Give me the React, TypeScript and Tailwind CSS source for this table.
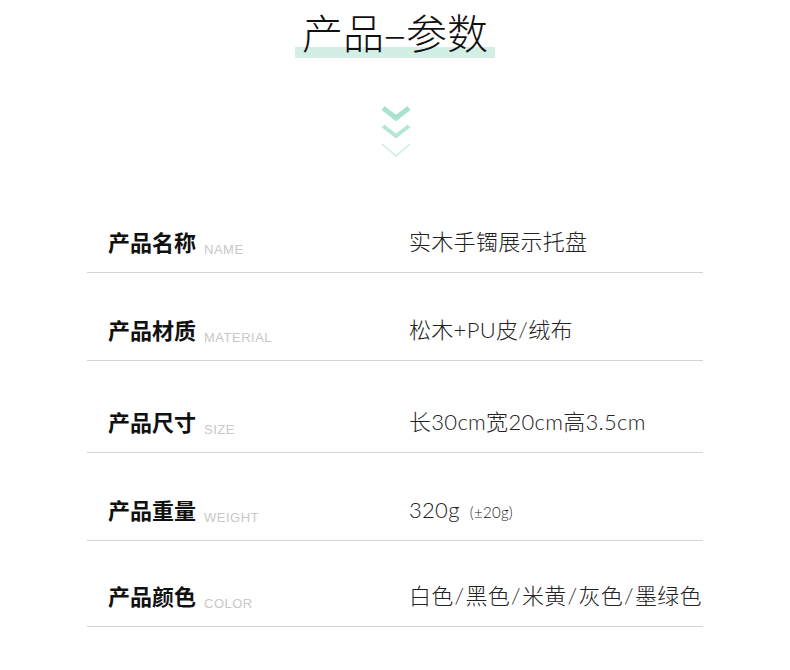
import React from "react";

const rows = [
  { label: "产品名称", en: "NAME", value: "实木手镯展示托盘", h: "h-[88px]" },
  { label: "产品材质", en: "MATERIAL", value: "松木+PU皮/绒布", h: "h-[88px]" },
  { label: "产品尺寸", en: "SIZE", value: "长30cm宽20cm高3.5cm", h: "h-[92px]" },
  { label: "产品重量", en: "WEIGHT", value: "320g", note: "(±20g)", h: "h-[88px]" },
  { label: "产品颜色", en: "COLOR", colors: ["白色", "黑色", "米黄", "灰色", "墨绿色"], h: "h-[86px]" },
];

const Chevrons = () => (
  <svg width="32" height="58" viewBox="0 0 32 58" fill="none">
    <path d="M3 5 L16 15 L29 5" stroke="#a9e3cf" strokeWidth="5" />
    <path d="M3 23 L16 33 L29 23" stroke="#b5e7d6" strokeWidth="4" />
    <path d="M2 41 L16 53 L30 41" stroke="#c9eee1" strokeWidth="1.5" />
  </svg>
);

export default function App() {
  return (
    <div className="w-[790px] h-[670px] bg-white overflow-hidden font-['Noto_Sans_CJK_SC','Noto_Sans',sans-serif]">
      <div className="flex justify-center pt-[3px]">
        <div className="relative px-[7px]">
          <div className="absolute left-0 right-0 bottom-[1px] h-[11px] bg-[#d3efe5]" />
          <h1 className="relative text-[41px] leading-[56px] font-light text-[#111]">产品–参数</h1>
        </div>
      </div>
      <div className="flex justify-center mt-[44px] ml-[1px]">
        <Chevrons />
      </div>
      <div className="mt-[24px] mx-[87px] w-[616px]">
        {rows.map((r) => (
          <div key={r.label} className={`${r.h} flex items-end border-b border-[#d4d4d4]`}>
            <div className="flex items-center w-full h-[60px] pb-[1px]">
              <div className="w-[322px] shrink-0 pl-[21px] flex items-baseline">
                <span className="text-[22px] font-bold text-[#111]">{r.label}</span>
                <span className="ml-[8px] text-[13px] text-[#c8c8c8] font-['Liberation_Sans',sans-serif] tracking-[0.5px] relative top-[3px]">{r.en}</span>
              </div>
              <div className="flex items-baseline whitespace-nowrap text-[22px] font-light text-[#222] font-['Lato','Noto_Sans_CJK_SC',sans-serif] tracking-[0.3px]">
                {r.colors ? (
                  r.colors.map((c, i) => (
                    <span key={c}>
                      {i > 0 && <span className="px-[1px]">/</span>}
                      {c}
                    </span>
                  ))
                ) : (
                  <span>{r.value}</span>
                )}
                {r.note && <span className="ml-[10px] text-[15px]">{r.note}</span>}
              </div>
            </div>
          </div>
        ))}
      </div>
    </div>
  );
}
